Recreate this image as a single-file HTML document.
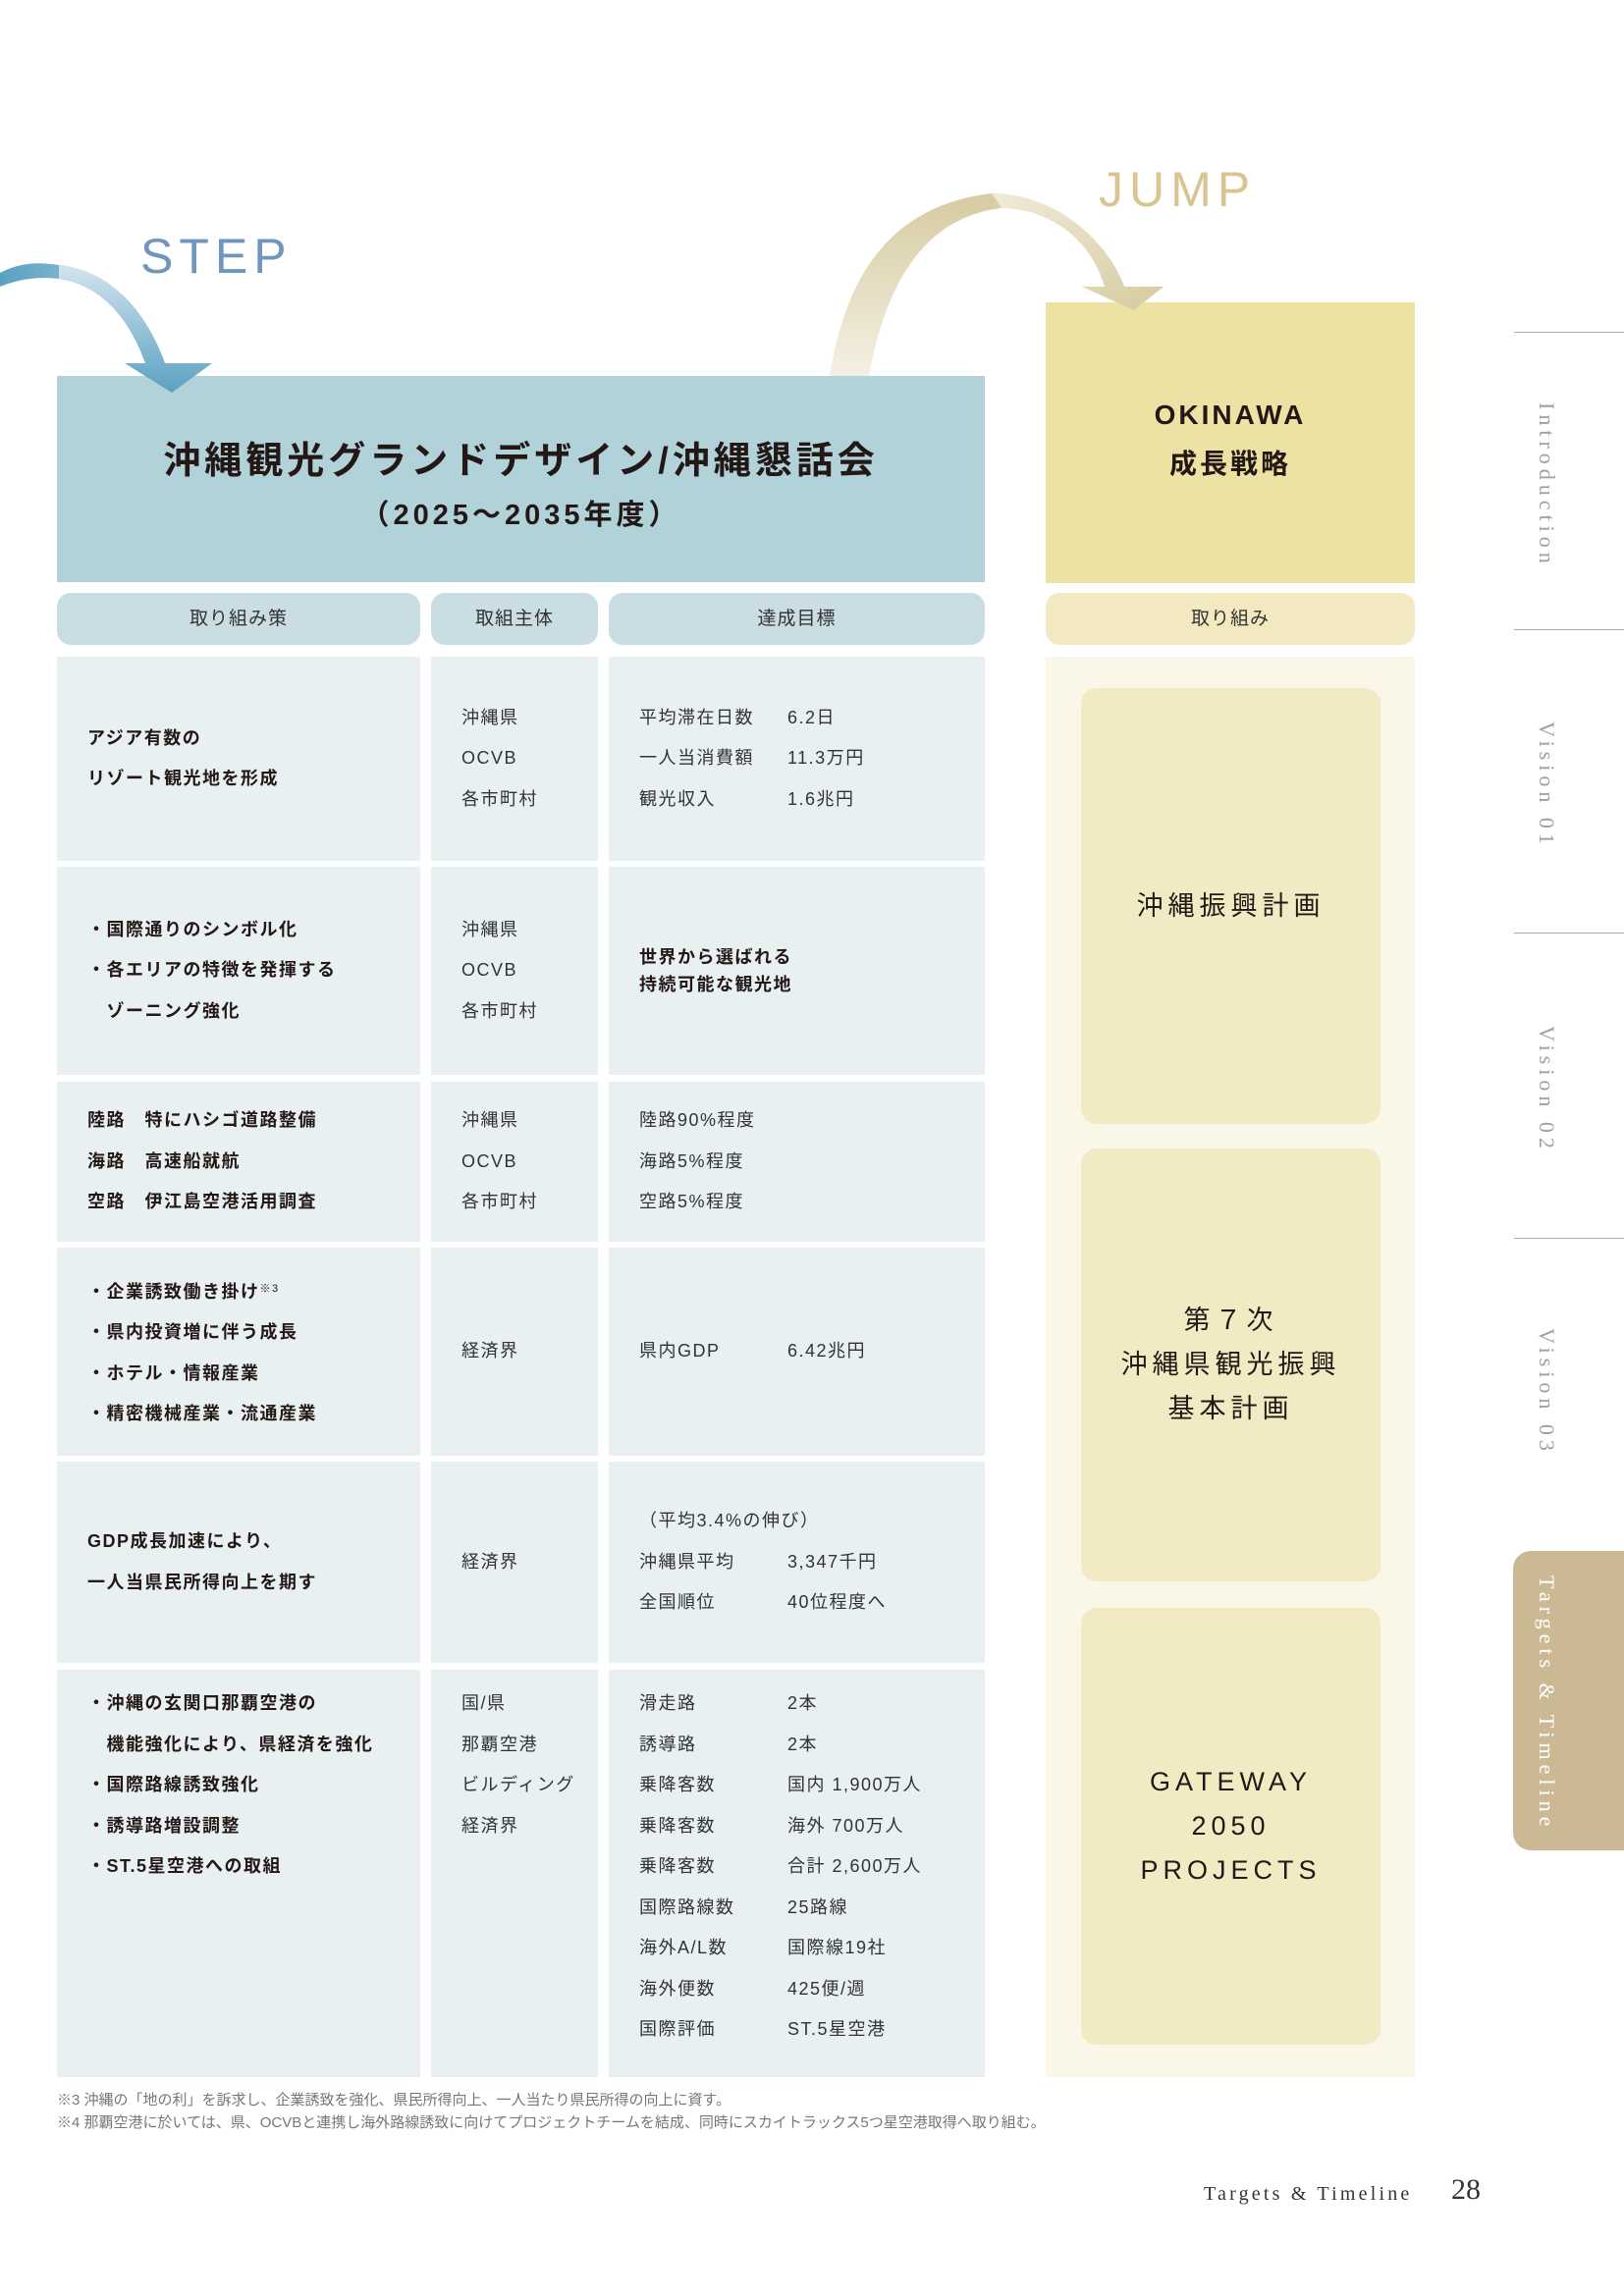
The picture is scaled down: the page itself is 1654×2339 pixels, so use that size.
<!DOCTYPE html>
<html><head><meta charset="utf-8">
<style>
*{margin:0;padding:0;box-sizing:border-box}
body{width:1654px;height:2339px;background:#fff;position:relative;overflow:hidden;font-family:"Liberation Sans","Noto Sans CJK JP",sans-serif;color:#231815}
.a{position:absolute}
.cell{position:absolute;background:#e8f0f2;display:flex;flex-direction:column;justify-content:center;font-size:18px;line-height:41.5px;letter-spacing:1.5px}
.c1{left:58px;width:370px;padding-left:31px;font-weight:bold}
.c2{left:439px;width:170px;padding-left:31px;color:#333}
.c3{left:620px;width:383px;padding-left:31px;color:#333}
.c3 span{display:inline-block;width:151px}
.pill{position:absolute;top:604px;height:53px;border-radius:14px;background:#c9dde2;text-align:center;line-height:53px;font-size:19px;color:#333;letter-spacing:1px}
.vt{position:absolute;writing-mode:vertical-rl;font-family:"Liberation Serif","DejaVu Serif",serif;font-size:22px;letter-spacing:5px;color:#a0a0a0;left:1562px}
.ln{position:absolute;left:1542px;width:112px;height:1px;background:#aaa}
.ib{position:absolute;left:1101px;width:305px;background:#f2eac3;border-radius:16px;display:flex;flex-direction:column;justify-content:center;align-items:center;text-align:center;font-size:27px;letter-spacing:5px;line-height:45px}
</style></head><body>
<div class="a" style="left:143px;top:232px;font-size:50px;color:#6f96bd;letter-spacing:6px;font-weight:300">STEP</div>
<div class="a" style="left:1119px;top:164px;font-size:50px;color:#d8c590;letter-spacing:6px;font-weight:300">JUMP</div>

<div class="a" style="left:58px;top:383px;width:945px;height:210px;background:#b1d2d9;text-align:center">
<div style="margin-top:62px;font-size:38px;font-weight:bold;letter-spacing:4px;line-height:50px">沖縄観光グランドデザイン/沖縄懇話会</div>
<div style="font-size:29px;font-weight:bold;letter-spacing:4px;line-height:44px;margin-top:8px">（2025～2035年度）</div>
</div>
<div class="a" style="left:1065px;top:308px;width:376px;height:286px;background:#ece2a3;text-align:center;font-weight:bold;font-size:28px;letter-spacing:3px;line-height:50px;padding-top:90px">OKINAWA<br>成長戦略</div>

<svg class="a" style="left:0;top:0" width="1654" height="700">
<defs>
<linearGradient id="gb" x1="0" y1="0" x2="0" y2="1"><stop offset="0" stop-color="#d4e4ee"/><stop offset="1" stop-color="#5aa1c2"/></linearGradient>
<linearGradient id="gl" x1="0" y1="0" x2="1" y2="0"><stop offset="0" stop-color="#5aa1c2"/><stop offset="1" stop-color="#c8dcea"/></linearGradient>
<linearGradient id="gg" x1="0" y1="1" x2="0" y2="0"><stop offset="0" stop-color="#f5f0e4"/><stop offset="1" stop-color="#d6cba0"/></linearGradient>
<linearGradient id="gg2" x1="0" y1="0" x2="1" y2="1"><stop offset="0" stop-color="#f0ebd8"/><stop offset="1" stop-color="#d6cba0"/></linearGradient>
</defs>
<path d="M0 278 C25 265 45 268 60 270 C115 276 150 320 168 370 L216 370 L175 400 L127 370 L148 370 C130 320 100 290 60 284 C35 281 15 286 0 292 Z" fill="url(#gl)"/>
<path d="M60 270 C115 276 150 320 168 370 L216 370 L175 400 L127 370 L148 370 C130 320 100 290 60 284 Z" fill="url(#gb)"/>
<path d="M845 383 C860 290 900 210 1010 197 C1080 198 1130 250 1145 292 L1185 292 L1155 316 L1102 292 L1125 292 C1110 240 1065 212 1020 212 C935 222 900 300 885 383 Z" fill="url(#gg)"/>
<path d="M1010 197 C1080 198 1130 250 1145 292 L1185 292 L1155 316 L1102 292 L1125 292 C1110 240 1065 212 1020 212 Z" fill="url(#gg2)"/>
</svg>

<div class="pill" style="left:58px;width:370px">取り組み策</div>
<div class="pill" style="left:439px;width:170px">取組主体</div>
<div class="pill" style="left:620px;width:383px">達成目標</div>
<div class="pill" style="left:1065px;width:376px;background:#f2e9c1">取り組み</div>

<div class="a" style="left:1065px;top:669px;width:376px;height:1447px;background:#faf7e8"></div>
<div class="ib" style="top:701px;height:444px">沖縄振興計画</div>
<div class="ib" style="top:1170px;height:441px">第７次<br>沖縄県観光振興<br>基本計画</div>
<div class="ib" style="top:1638px;height:445px;letter-spacing:5px">GATEWAY<br>2050<br>PROJECTS</div>

<div class="cell c1" style="top:669px;height:208px"><div>アジア有数の<br>リゾート観光地を形成</div></div>
<div class="cell c2" style="top:669px;height:208px"><div>沖縄県<br>OCVB<br>各市町村</div></div>
<div class="cell c3" style="top:669px;height:208px"><div><span>平均滞在日数</span>6.2日</div><div><span>一人当消費額</span>11.3万円</div><div><span>観光収入</span>1.6兆円</div></div>

<div class="cell c1" style="top:883px;height:212px"><div>・国際通りのシンボル化<br>・各エリアの特徴を発揮する<br>　ゾーニング強化</div></div>
<div class="cell c2" style="top:883px;height:212px"><div>沖縄県<br>OCVB<br>各市町村</div></div>
<div class="cell c3" style="top:883px;height:212px;font-weight:bold;color:#231815;line-height:28px"><div>世界から選ばれる<br>持続可能な観光地</div></div>

<div class="cell c1" style="top:1102px;height:163px"><div>陸路　特にハシゴ道路整備<br>海路　高速船就航<br>空路　伊江島空港活用調査</div></div>
<div class="cell c2" style="top:1102px;height:163px"><div>沖縄県<br>OCVB<br>各市町村</div></div>
<div class="cell c3" style="top:1102px;height:163px"><div>陸路90%程度<br>海路5%程度<br>空路5%程度</div></div>

<div class="cell c1" style="top:1271px;height:212px"><div>・企業誘致働き掛け<span style="font-size:11px;font-weight:normal;vertical-align:6px">※3</span><br>・県内投資増に伴う成長<br>・ホテル・情報産業<br>・精密機械産業・流通産業</div></div>
<div class="cell c2" style="top:1271px;height:212px"><div>経済界</div></div>
<div class="cell c3" style="top:1271px;height:212px"><div><span>県内GDP</span>6.42兆円</div></div>

<div class="cell c1" style="top:1489px;height:205px"><div>GDP成長加速により、<br>一人当県民所得向上を期す</div></div>
<div class="cell c2" style="top:1489px;height:205px"><div>経済界</div></div>
<div class="cell c3" style="top:1489px;height:205px"><div>（平均3.4%の伸び）</div><div><span>沖縄県平均</span>3,347千円</div><div><span>全国順位</span>40位程度へ</div></div>

<div class="cell c1" style="top:1701px;height:415px;justify-content:flex-start;padding-top:14px"><div>・沖縄の玄関口那覇空港の<br>　機能強化により、県経済を強化<br>・国際路線誘致強化<br>・誘導路増設調整<br>・ST.5星空港への取組</div></div>
<div class="cell c2" style="top:1701px;height:415px;justify-content:flex-start;padding-top:14px"><div>国/県<br>那覇空港<br>ビルディング<br>経済界</div></div>
<div class="cell c3" style="top:1701px;height:415px;justify-content:flex-start;padding-top:14px"><div><span>滑走路</span>2本</div><div><span>誘導路</span>2本</div><div><span>乗降客数</span>国内 1,900万人</div><div><span>乗降客数</span>海外 700万人</div><div><span>乗降客数</span>合計 2,600万人</div><div><span>国際路線数</span>25路線</div><div><span>海外A/L数</span>国際線19社</div><div><span>海外便数</span>425便/週</div><div><span>国際評価</span>ST.5星空港</div></div>

<div class="a" style="left:58px;top:2128px;font-size:15px;color:#777;line-height:23px">※3 沖縄の「地の利」を訴求し、企業誘致を強化、県民所得向上、一人当たり県民所得の向上に資す。<br>※4 那覇空港に於いては、県、OCVBと連携し海外路線誘致に向けてプロジェクトチームを結成、同時にスカイトラックス5つ星空港取得へ取り組む。</div>
<div class="a" style="left:1226px;top:2224px;font-family:'Liberation Serif',serif;font-size:20px;letter-spacing:3.2px;color:#333">Targets &amp; Timeline</div>
<div class="a" style="left:1478px;top:2214px;font-family:'Liberation Serif',serif;font-size:30px;color:#333">28</div>

<div class="ln" style="top:338px"></div>
<div class="ln" style="top:641px"></div>
<div class="ln" style="top:950px"></div>
<div class="ln" style="top:1261px"></div>
<div class="vt" style="top:410px">Introduction</div>
<div class="vt" style="top:735px">Vision 01</div>
<div class="vt" style="top:1045px">Vision 02</div>
<div class="vt" style="top:1353px">Vision 03</div>
<div class="a" style="left:1541px;top:1580px;width:113px;height:305px;background:#cbb994;border-radius:18px 0 0 18px"></div>
<div class="vt" style="top:1605px;color:#fff">Targets &amp; Timeline</div>
</body></html>
